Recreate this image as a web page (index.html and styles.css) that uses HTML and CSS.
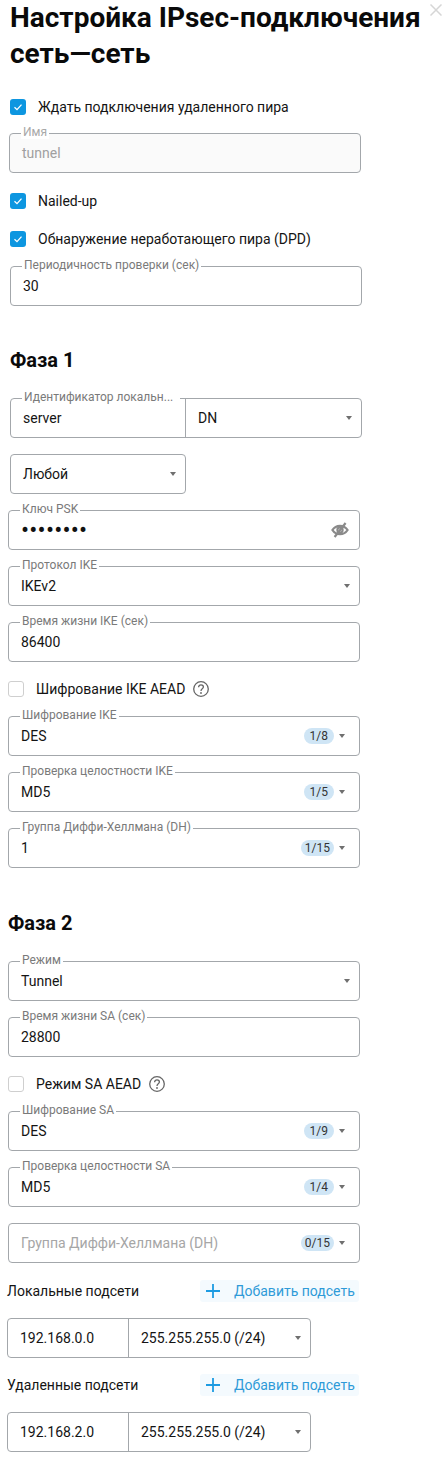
FILE: index.html
```html
<!DOCTYPE html>
<html>
<head>
<meta charset="utf-8">
<link rel="stylesheet" href="styles.css">
</head>
<body>
<svg class="close" viewBox="0 0 12 12"><path d="M0.5 0.5L11.5 11.5M11.5 0.5L0.5 11.5"/></svg>
<h1>Настройка IPsec-подключения<br>сеть—сеть</h1>

<!-- top block, sits 1-2px right of the rest -->
<div class="block-top">
  <label class="check first"><span class="box on"><svg viewBox="0 0 16 16"><path d="M4.5 8.2L7 10.6L11.5 5.6"/></svg></span>Ждать подключения удаленного пира</label>
  <div class="field disabled name-field"><span class="lbl">Имя</span><span class="val">tunnel</span></div>
  <label class="check nailed"><span class="box on"><svg viewBox="0 0 16 16"><path d="M4.5 8.2L7 10.6L11.5 5.6"/></svg></span>Nailed-up</label>
  <label class="check dpd"><span class="box on"><svg viewBox="0 0 16 16"><path d="M4.5 8.2L7 10.6L11.5 5.6"/></svg></span>Обнаружение неработающего пира (DPD)</label>
  <div class="field period"><span class="lbl">Периодичность проверки (сек)</span><span class="val">30</span></div>
  <h2 class="phase1">Фаза 1</h2>
  <div class="field id-group">
    <span class="lbl lbl-id">Идентификатор локальн...</span>
    <span class="id-val">server</span>
    <span class="id-sel">DN<i class="caret"></i></span>
  </div>
  <div class="field any"><span class="val">Любой</span><i class="caret"></i></div>
</div>

<div class="block">
  <div class="field psk">
    <span class="lbl">Ключ PSK</span><span class="val dots">••••••••</span>
    <svg class="eye" viewBox="0 0 18 18"><path d="M1.4 9C3.2 6.2 5.8 4.8 9 4.8S14.8 6.2 16.6 9C14.8 11.8 12.2 13.2 9 13.2S3.2 11.8 1.4 9Z"/><circle cx="9" cy="9" r="2.6"/><path d="M3.6 16L14.6 2"/></svg>
  </div>
  <div class="field"><span class="lbl">Протокол IKE</span><span class="val">IKEv2</span><i class="caret"></i></div>
  <div class="field"><span class="lbl">Время жизни IKE (сек)</span><span class="val">86400</span></div>
  <label class="check aead"><span class="box"></span>Шифрование IKE AEAD<svg class="help" viewBox="0 0 16 16"><circle cx="8" cy="8" r="7.3"/><path d="M5.6 6.2C5.6 4.8 6.7 3.9 8 3.9S10.4 4.8 10.4 6.1C10.4 7.8 8 7.9 8 9.9"/><circle class="dot" cx="8" cy="12" r="0.9"/></svg></label>
  <div class="field after-aead"><span class="lbl">Шифрование IKE</span><span class="val">DES</span><span class="pill">1/8</span><i class="caret"></i></div>
  <div class="field"><span class="lbl">Проверка целостности IKE</span><span class="val">MD5</span><span class="pill">1/5</span><i class="caret"></i></div>
  <div class="field"><span class="lbl">Группа Диффи-Хеллмана (DH)</span><span class="val">1</span><span class="pill wide">1/15</span><i class="caret"></i></div>

  <h2 class="phase2">Фаза 2</h2>
  <div class="field mode"><span class="lbl">Режим</span><span class="val">Tunnel</span><i class="caret"></i></div>
  <div class="field"><span class="lbl">Время жизни SA (сек)</span><span class="val">28800</span></div>
  <label class="check aead"><span class="box"></span>Режим SA AEAD<svg class="help" viewBox="0 0 16 16"><circle cx="8" cy="8" r="7.3"/><path d="M5.6 6.2C5.6 4.8 6.7 3.9 8 3.9S10.4 4.8 10.4 6.1C10.4 7.8 8 7.9 8 9.9"/><circle class="dot" cx="8" cy="12" r="0.9"/></svg></label>
  <div class="field after-aead"><span class="lbl">Шифрование SA</span><span class="val">DES</span><span class="pill">1/9</span><i class="caret"></i></div>
  <div class="field"><span class="lbl">Проверка целостности SA</span><span class="val">MD5</span><span class="pill">1/4</span><i class="caret"></i></div>
  <div class="field"><span class="val placeholder">Группа Диффи-Хеллмана (DH)</span><span class="pill wide">0/15</span><i class="caret"></i></div>
</div>

<div class="block-net">
  <div class="net-head first-net">
    <span>Локальные подсети</span>
    <a class="add"><svg viewBox="0 0 16 16"><path d="M8 1V15M1 8H15"/></svg>Добавить подсеть</a>
  </div>
  <div class="field net"><span class="net-ip">192.168.0.0</span><span class="net-mask">255.255.255.0 (/24)<i class="caret"></i></span></div>
  <div class="net-head">
    <span>Удаленные подсети</span>
    <a class="add"><svg viewBox="0 0 16 16"><path d="M8 1V15M1 8H15"/></svg>Добавить подсеть</a>
  </div>
  <div class="field net"><span class="net-ip">192.168.2.0</span><span class="net-mask">255.255.255.0 (/24)<i class="caret"></i></span></div>
</div>
</body>
</html>
```

FILE: styles.css
```css
* {
  box-sizing: border-box;
}

html, body {
  margin: 0;
  padding: 0;
}

body {
  position: relative;
  height: 1462px;
  overflow: hidden;
  background: #fff;
  color: #141414;
  font-family: Roboto, "Liberation Sans", sans-serif;
  font-size: 14px;
}

h1 {
  margin: 0;
  padding: 0 0 0 10px;
  font-size: 28px;
  line-height: 36px;
  font-weight: 700;
  color: #0a0a0a;
  white-space: nowrap;
}

h2 {
  margin: 0;
  font-size: 20px;
  line-height: 24px;
  font-weight: 700;
  color: #0a0a0a;
}

.close {
  position: absolute;
  top: 4px;
  left: 430px;
  width: 12px;
  height: 12px;
  fill: none;
  stroke: #d6d6d6;
  stroke-width: 1.5;
}

.block-top {
  padding-left: 10px;
}

.block {
  padding-left: 8px;
  margin-top: 16px;
}

.block-net {
  padding-left: 7px;
  padding-top: 1px;
}

/* checkboxes */
.check {
  display: flex;
  align-items: center;
  height: 16px;
  line-height: 16px;
}

.check.first { margin-top: 27px; }
.check.nailed { margin-top: 20px; }
.check.dpd { margin-top: 22px; }
.check.aead { margin-top: 19px; }

.box {
  width: 16px;
  height: 16px;
  margin-right: 12px;
  border: 1px solid #cfcfcf;
  border-radius: 3px;
  background: #fff;
  flex: none;
}

.box.on {
  border: 0;
  background: #0d96e0;
}

.box svg {
  display: block;
  fill: none;
  stroke: #fff;
  stroke-width: 1.3;
}

.help {
  width: 16px;
  height: 16px;
  margin-left: 8px;
  fill: none;
  stroke: #666;
  stroke-width: 1.3;
}

.help .dot {
  fill: #666;
  stroke: none;
}

/* outlined fields */
.field {
  position: relative;
  display: flex;
  align-items: center;
  width: 352px;
  height: 40px;
  margin-top: 16px;
  padding: 0 12px;
  border: 1px solid #a3a7ab;
  border-radius: 4px;
  background: #fff;
}

.field.disabled {
  background: #fafafa;
  color: #a0a0a0;
  margin-top: 18px;
  margin-left: -1px;
}

.field.period { margin-top: 19px; }

.lbl {
  position: absolute;
  top: -9px;
  left: 11px;
  padding: 0 2px;
  font-size: 12px;
  line-height: 14px;
  color: #7a7a7a;
  background: #fff;
  white-space: nowrap;
}

.disabled .lbl { color: #a8a8a8; }

.val {
  flex: 1;
  white-space: nowrap;
}

.placeholder { color: #a6a6a6; }

.dots {
  font-size: 24px;
  line-height: 20px;
  letter-spacing: 0.2px;
  color: #111;
}

.pill {
  height: 16px;
  line-height: 16px;
  margin-right: 13px;
  padding: 0 6px;
  border-radius: 8px;
  background: #cfe5f5;
  font-size: 12px;
  color: #333;
}

.pill.wide { padding: 0 4px; }

.caret {
  position: absolute;
  right: 9px;
  top: 50%;
  margin-top: -2px;
  border-left: 3.5px solid transparent;
  border-right: 3.5px solid transparent;
  border-top: 4px solid #6f6f6f;
}

.pill + .caret { right: 14px; }

.eye {
  width: 18px;
  height: 18px;
  position: absolute;
  right: 10px;
  top: 10px;
  fill: none;
  stroke: #8a8a8a;
  stroke-width: 2.2;
}

.phase1 { margin-top: 42px; }
.phase2 { margin-top: 43px; margin-bottom: 0; }
.field.mode { margin-top: 26px; }
.field.after-aead { margin-top: 19px; }

/* combined fields */
.id-group {
  margin-top: 26px;
  padding: 0;
}

.lbl-id {
  width: 158px;
  padding-right: 8px;
}

.id-val {
  width: 175px;
  height: 100%;
  padding-left: 12px;
  line-height: 38px;
  border-right: 1px solid #a3a7ab;
}

.id-sel {
  padding-left: 12px;
}

.any {
  width: 176px;
}

.net-head {
  display: flex;
  align-items: center;
  justify-content: space-between;
  width: 352px;
  height: 22px;
  margin-top: 16px;
}

.add {
  display: flex;
  align-items: center;
  width: 159px;
  height: 22px;
  padding-left: 5px;
  border-radius: 3px;
  background: #f4fafe;
  color: #2f9ad8;
}

.add svg {
  width: 16px;
  height: 16px;
  margin-right: 13px;
  fill: none;
  stroke: #1d9be2;
  stroke-width: 1.8;
}

.net {
  width: 304px;
  padding: 0;
}

.net-ip {
  width: 121px;
  height: 100%;
  padding-left: 12px;
  line-height: 38px;
  border-right: 1px solid #a3a7ab;
}

.net-mask {
  padding-left: 12px;
}
```
